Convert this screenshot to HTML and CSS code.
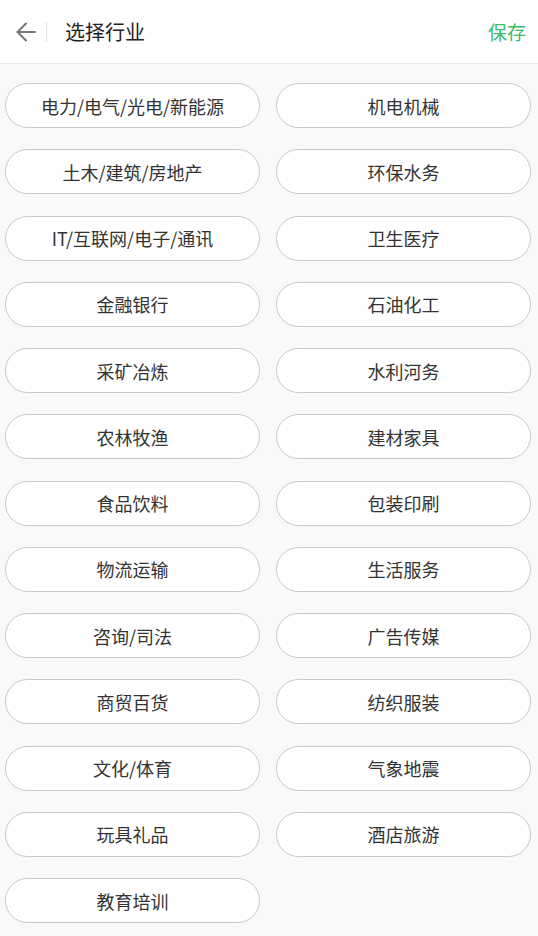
FILE: index.html
```html
<!DOCTYPE html>
<html lang="zh-CN">
<head>
<meta charset="utf-8">
<title>选择行业</title>
<link rel="stylesheet" href="styles.css">
</head>
<body>
<header class="topbar">
  <div class="back">
    <svg width="20" height="20" viewBox="0 0 20 20" fill="none" stroke="#777" stroke-width="2" stroke-linecap="round" stroke-linejoin="round">
      <path d="M19 10H1.5"/>
      <path d="M10 1.5L1.5 10L10 18.5"/>
    </svg>
  </div>
  <span class="divider"></span>
  <h1 class="title">选择行业</h1>
  <span class="save">保存</span>
</header>
<main class="grid">
  <div class="item">电力/电气/光电/新能源</div>
  <div class="item">机电机械</div>
  <div class="item">土木/建筑/房地产</div>
  <div class="item">环保水务</div>
  <div class="item">IT/互联网/电子/通讯</div>
  <div class="item">卫生医疗</div>
  <div class="item">金融银行</div>
  <div class="item">石油化工</div>
  <div class="item">采矿冶炼</div>
  <div class="item">水利河务</div>
  <div class="item">农林牧渔</div>
  <div class="item">建材家具</div>
  <div class="item">食品饮料</div>
  <div class="item">包装印刷</div>
  <div class="item">物流运输</div>
  <div class="item">生活服务</div>
  <div class="item">咨询/司法</div>
  <div class="item">广告传媒</div>
  <div class="item">商贸百货</div>
  <div class="item">纺织服装</div>
  <div class="item">文化/体育</div>
  <div class="item">气象地震</div>
  <div class="item">玩具礼品</div>
  <div class="item">酒店旅游</div>
  <div class="item">教育培训</div>
</main>
</body>
</html>
```
FILE: styles.css
```css
html, body {
  margin: 0;
  padding: 0;
}
body {
  width: 538px;
  height: 936px;
  overflow: hidden;
  background: #f9f9f9;
  font-family: "Noto Sans CJK SC", "Noto Sans", sans-serif;
  color: #333;
}
.topbar {
  height: 63px;
  background: #fff;
  border-bottom: 1px solid #e6e6e6;
  display: flex;
  align-items: center;
  box-sizing: content-box;
}
.back {
  width: 20px;
  height: 20px;
  margin-left: 16px;
  display: flex;
}
.divider {
  width: 1px;
  height: 20px;
  background: #e0e0e0;
  margin-left: 10px;
}
.title {
  margin: 0 0 0 18px;
  font-size: 20px;
  font-weight: 400;
  color: #222;
  flex: 1;
}
.save {
  font-size: 19px;
  color: #3dba6c;
  margin-right: 12px;
}
.grid {
  display: grid;
  grid-template-columns: 255px 255px;
  column-gap: 16px;
  row-gap: 21.25px;
  padding: 19px 0 0 5px;
}
.item {
  height: 45px;
  box-sizing: border-box;
  border: 1px solid #c9c9c9;
  border-radius: 23px;
  background: #fff;
  display: flex;
  align-items: center;
  justify-content: center;
  font-size: 18px;
  color: #333;
}
```
